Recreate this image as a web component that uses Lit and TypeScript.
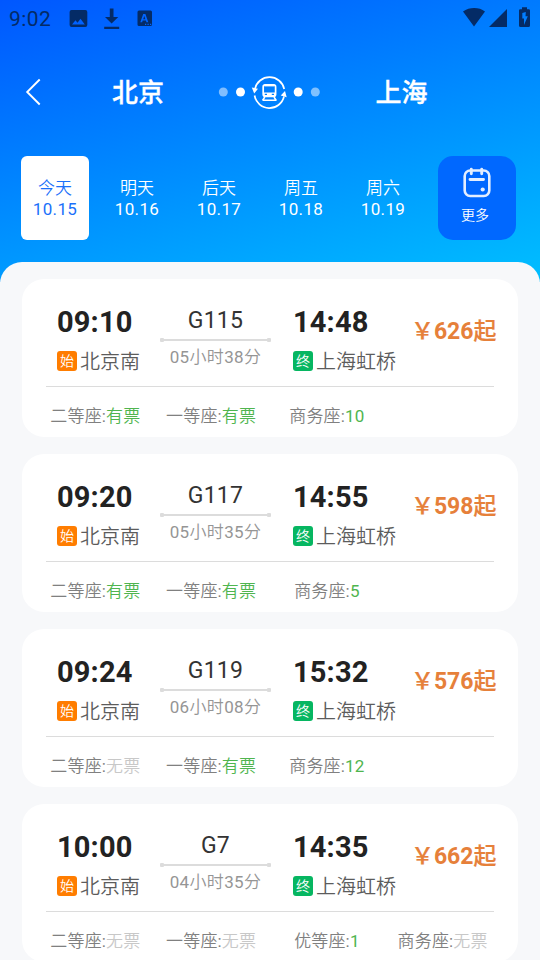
import { LitElement, html, css, svg, nothing } from "lit";
import { customElement, property, state } from "lit/decorators.js";
import { classMap } from "lit/directives/class-map.js";

interface Seat {
  name: string;
  left: string;
}

interface Train {
  no: string;
  depart: string;
  arrive: string;
  duration: [string, string];
  price: number;
  seats: Seat[];
}

const seat = (name: string, left: string): Seat => ({ name, left });

const TRAINS: Train[] = [
  {
    no: "G115", depart: "09:10", arrive: "14:48", duration: ["05", "38"], price: 626,
    seats: [seat("二等座", "有票"), seat("一等座", "有票"), seat("商务座", "10")],
  },
  {
    no: "G117", depart: "09:20", arrive: "14:55", duration: ["05", "35"], price: 598,
    seats: [seat("二等座", "有票"), seat("一等座", "有票"), seat("商务座", "5")],
  },
  {
    no: "G119", depart: "09:24", arrive: "15:32", duration: ["06", "08"], price: 576,
    seats: [seat("二等座", "无票"), seat("一等座", "有票"), seat("商务座", "12")],
  },
  {
    no: "G7", depart: "10:00", arrive: "14:35", duration: ["04", "35"], price: 662,
    seats: [seat("二等座", "无票"), seat("一等座", "无票"), seat("优等座", "1"), seat("商务座", "无票")],
  },
];

const DAYS = [
  ["今天", "10.15"],
  ["明天", "10.16"],
  ["后天", "10.17"],
  ["周五", "10.18"],
  ["周六", "10.19"],
];

@customElement("status-bar")
class StatusBar extends LitElement {
  static styles = css`
    :host {
      display: flex;
      align-items: center;
      height: 38px;
      padding: 0 9px;
      color: #042b66;
      font-size: 21px;
      line-height: 38px;
    }
    .clock { width: 60px; letter-spacing: 0.45px; }
    .left { flex: 1; }
    svg { display: block; fill: currentColor; }
  `;
  render() {
    return html`
      <span class="clock">9:02</span>
      <svg class="left" height="38" viewBox="0 0 390 38" preserveAspectRatio="xMinYMid meet">
        <path fill-rule="evenodd" d="M2.600 10h13.700a2 2 0 0 1 2 2v13a2 2 0 0 1-2 2H2.600a2 2 0 0 1-2-2V12a2 2 0 0 1 2-2zM3 24.500h12.800l-4.300-5.700-3 3.900-2-2.500z"/>
        <path d="M40.800 8.500h3.700v8.500h4.800l-6.700 6.600-6.600-6.600h4.800zM35.200 26.800h15v2.100h-15z"/>
        <path fill-rule="evenodd" d="M70 10.500h11.500a1.500 1.500 0 0 1 1.500 1.500v12.500a1.500 1.500 0 0 1-1.500 1.500H70a1.500 1.500 0 0 1-1.500-1.500V12a1.500 1.500 0 0 1 1.500-1.500zM74.200 14l-2.900 8.300h1.800l.6-1.800h3.200l.6 1.800h1.800L76.400 14zM75.300 16l1.100 3.200h-2.200zM76 23.700v1.200h1.200v-1.200zM78.500 23.700v1.200h1.200v-1.200zM81 23.700v1.200h1.200v-1.200z"/>
      </svg>
      <svg width="70" height="38" viewBox="461 0 70 38">
        <path d="M463 11.500C469.500 6.900 479 6.900 485 11.500L474 26.500zM507 9v18h-18z"/>
        <path fill-rule="evenodd" d="M522 7.300h5v2h1.700a1.300 1.300 0 0 1 1.300 1.300v14.900a1.500 1.500 0 0 1-1.500 1.500h-8a1.500 1.500 0 0 1-1.500-1.500V10.600a1.300 1.300 0 0 1 1.300-1.300H522zM525.800 12l-3.500 1v5.500h1.700V25l3.800-8.700h-2.300z"/>
      </svg>
    `;
  }
}

@customElement("route-header")
class RouteHeader extends LitElement {
  @property() from = "";
  @property() to = "";
  static styles = css`
    :host {
      display: grid;
      grid-template-columns: 62px 152px 111px 153px 62px;
      align-items: center;
      height: 108px;
      color: #fff;
    }
    svg { display: block; fill: none; stroke: currentColor; }
    .back { margin-left: 22px; }
    .city {
      text-align: center;
      font-size: 26px;
      font-weight: 500;
      line-height: 36px;
      padding-top: 2px;
      -webkit-text-stroke: 0.3px #fff;
    }
    .dot { fill: currentColor; stroke: none; }
    .faint { opacity: 0.5; }
  `;
  render() {
    const dot = (x: number, faint: boolean) =>
      svg`<circle class=${classMap({ dot: true, faint })} cx=${x} cy="20" r="4.500"/>`;
    return html`
      <svg class="back" width="24" height="30" viewBox="0 0 24 30" stroke-width="1.900">
        <path d="M17.700 2.500 5.200 15 17.700 27.500"/>
      </svg>
      <div class="city">${this.from}</div>
      <svg width="111" height="40" viewBox="214 0 111 40">
        ${dot(223.3, true)} ${dot(240.5, false)} ${dot(298.2, false)} ${dot(315.3, true)}
        <g stroke-width="1.700">
          <path d="M254.900 17A15 15 0 0 1 284.200 17M284 24.500A15 15 0 0 1 254.600 23.500"/>
          <path class="dot" d="M251.800 15.500l6.200 1.200-3.800 4.700zM286.700 25.200l-6-1.600 4.300-4.600z"/>
          <rect x="263.200" y="12.800" width="12.400" height="11.500" rx="2"/>
          <path d="M264.500 13.300h10" stroke-width="2.200"/>
          <path d="M263.200 22.300h12.400" stroke-width="3.600"/>
          <path d="M264.800 25l-2.300 3.500M274 25l2.300 3.500M262.500 28.200h14" stroke-width="1.500"/>
        </g>
        <path d="M264.800 22.400h2.200M271.800 22.400h2.200" stroke="#0081ff" stroke-width="1.300"/>
      </svg>
      <div class="city">${this.to}</div>
    `;
  }
}

@customElement("date-strip")
class DateStrip extends LitElement {
  @state() private active = 0;
  static styles = css`
    :host {
      display: flex;
      justify-content: space-between;
      padding: 10px 24px 0 21px;
      height: 84px;
      color: #fff;
    }
    .days { display: flex; gap: 14px; }
    .day {
      width: 68px;
      height: 84px;
      box-sizing: border-box;
      padding-top: 22px;
      border-radius: 6px;
      text-align: center;
      font-size: 17px;
      line-height: 20px;
    }
    .name { font-weight: 350; }
    .date { letter-spacing: 0.35px; line-height: 22px; }
    .active { background: #fff; color: #1a70fa; }
    .more {
      width: 78px;
      height: 84px;
      border-radius: 15px;
      background: #0068ff;
      display: flex;
      flex-direction: column;
      align-items: center;
      font-size: 14px;
      line-height: 20px;
    }
    .label { margin: 5px 4px 0 0; font-weight: 350; }
    svg { display: block; margin-top: 10px; fill: none; stroke: #e3eeff; stroke-linecap: round; }
    .pip { fill: #e3eeff; stroke: none; }
  `;
  render() {
    return html`
      <div class="days">
        ${DAYS.map(([name, date], i) => html`
          <div class=${classMap({ day: true, active: i === this.active })} @click=${() => (this.active = i)}>
            <div class="name">${name}</div>
            <div class="date">${date}</div>
          </div>`)}
      </div>
      <div class="more">
        <svg width="30" height="34" viewBox="0 0 30 34" stroke-width="2.600">
          <rect x="2.700" y="4.500" width="24.600" height="25.500" rx="5.500"/>
          <path d="M9.300 3.300v4.500M19.700 3.300v4.500M8 13.500h13.500" stroke-width="2.900"/>
          <circle class="pip" cx="20.700" cy="23.500" r="2.100"/>
        </svg>
        <span class="label">更多</span>
      </div>
    `;
  }
}

@customElement("train-card")
class TrainCard extends LitElement {
  @property({ attribute: false }) train!: Train;
  static styles = css`
    :host {
      display: block;
      height: 158px;
      box-sizing: border-box;
      padding: 0 24px;
      border-radius: 22px;
      background: #fff;
    }
    .trip {
      display: grid;
      grid-template-columns: 103px 111px 22px 105px 1fr;
      height: 108px;
      box-sizing: border-box;
      padding: 25px 0 0 11px;
      border-bottom: 1px solid #dcdcdc;
    }
    .end { grid-column: 4; }
    .time {
      font-size: 29px;
      font-weight: 700;
      line-height: 36px;
      color: #222;
      letter-spacing: 0.15px;
    }
    .station {
      display: flex;
      align-items: center;
      gap: 3px;
      margin-top: 6px;
      height: 30px;
      font-size: 20px;
      font-weight: 350;
      color: #5c5c5c;
      white-space: nowrap;
    }
    .place { line-height: 28px; padding-top: 2px; }
    .tag {
      width: 20px;
      height: 20px;
      border-radius: 3px;
      background: #ff7d00;
      color: #fff;
      font-size: 14px;
      line-height: 20px;
      text-align: center;
    }
    .terminal { background: #06b661; }
    .mid { text-align: center; color: #333; }
    .no { font-size: 23px; line-height: 32px; letter-spacing: 0.3px; padding-top: 1px; }
    .line {
      display: flex;
      align-items: center;
      justify-content: space-between;
      height: 4px;
      margin-top: 1px;
      background: linear-gradient(#dcdcdc, #dcdcdc) center / 100% 2px no-repeat;
    }
    .knob { width: 4px; height: 4px; border-radius: 1px; background: #dcdcdc; }
    .duration {
      font-size: 17px;
      line-height: 24px;
      margin-top: 3px;
      color: #959595;
      letter-spacing: 0.35px;
      white-space: nowrap;
    }
    .han { font-weight: 350; }
    .price {
      justify-self: end;
      margin-right: -2.5px;
      padding-top: 12px;
      font-size: 23px;
      line-height: 32px;
      font-weight: 500;
      color: #e6803a;
      white-space: nowrap;
      -webkit-text-stroke: 0.2px #e6803a;
    }
    .amount { font-weight: 700; -webkit-text-stroke: 0; }
    .seats {
      display: flex;
      margin: 17px -6.500px 0 -8.500px;
      font-size: 17px;
      line-height: 24px;
      color: #808080;
    }
    .seat { width: 25%; text-align: center; white-space: nowrap; letter-spacing: 0.15px; }
    .open { color: #4fb54f; }
    .none { color: #c8c8c8; }
  `;
  render() {
    const t = this.train;
    if (!t) return nothing;
    const left = (s: Seat) => classMap({
      open: s.left !== "无票",
      none: s.left === "无票",
      han: !/\d/.test(s.left),
    });
    return html`
      <div class="trip">
        <div>
          <div class="time">${t.depart}</div>
          <div class="station"><span class="tag">始</span><span class="place">北京南</span></div>
        </div>
        <div class="mid">
          <div class="no">${t.no}</div>
          <div class="line"><i class="knob"></i><i class="knob"></i></div>
          <div class="duration">${t.duration[0]}<span class="han">小时</span>${t.duration[1]}<span class="han">分</span></div>
        </div>
        <div class="end">
          <div class="time">${t.arrive}</div>
          <div class="station"><span class="tag terminal">终</span><span class="place">上海虹桥</span></div>
        </div>
        <div class="price">￥<span class="amount">${t.price}</span>起</div>
      </div>
      <div class="seats">
        ${t.seats.map((s) => html`<div class="seat"><span class="han">${s.name}</span>:<span class=${left(s)}>${s.left}</span></div>`)}
      </div>
    `;
  }
}

@customElement("app-root")
class AppRoot extends LitElement {
  static styles = css`
    :host {
      display: block;
      height: 960px;
      overflow: hidden;
      background: linear-gradient(165deg, #0057ff 0, #00bfff 100%) top / 100% 282px no-repeat #f7f8fa;
      font-family: Roboto, "Noto Sans CJK SC", sans-serif;
    }
    .list {
      display: flex;
      flex-direction: column;
      gap: 17px;
      margin-top: 22px;
      padding: 17px 22px;
      border-radius: 22px 22px 0 0;
      background: #f7f8fa;
    }
  `;
  render() {
    return html`
      <status-bar></status-bar>
      <route-header from="北京" to="上海"></route-header>
      <date-strip></date-strip>
      <div class="list">${TRAINS.map((t) => html`<train-card .train=${t}></train-card>`)}</div>
    `;
  }
}
